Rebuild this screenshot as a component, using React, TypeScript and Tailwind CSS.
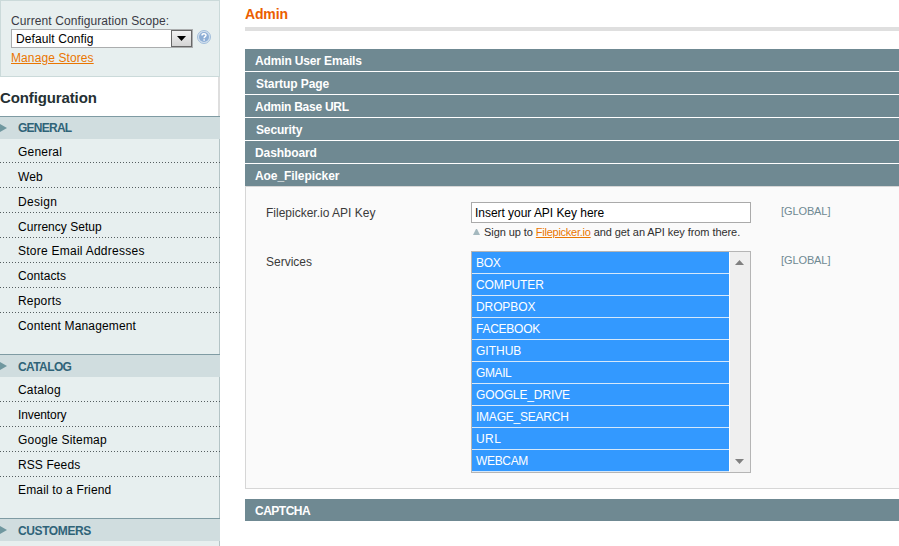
import React from "react";

type Item = { label: string; cls: string };

const general: Item[] = [
  { label: "General", cls: "h-6 pt-1.5 tracking-[0.2px]" },
  { label: "Web", cls: "h-[25px] pt-[7px] tracking-[0.1px]" },
  { label: "Design", cls: "h-[25px] pt-[7px] tracking-[0.3px]" },
  { label: "Currency Setup", cls: "h-[25px] pt-[7px] tracking-[0.02px]" },
  { label: "Store Email Addresses", cls: "h-[25px] pt-1.5 tracking-[0.25px]" },
  { label: "Contacts", cls: "h-[25px] pt-1.5 tracking-[0.1px]" },
  { label: "Reports", cls: "h-[25px] pt-1.5 tracking-[0.2px]" },
  { label: "Content Management", cls: "h-[41px] pt-1.5 tracking-[0.15px]" },
];

const catalog: Item[] = [
  { label: "Catalog", cls: "h-[25px] pt-1.5 tracking-[0.2px]" },
  { label: "Inventory", cls: "h-[25px] pt-1.5 tracking-[-0.1px]" },
  { label: "Google Sitemap", cls: "h-[25px] pt-1.5 tracking-[0.2px]" },
  { label: "RSS Feeds", cls: "h-[25px] pt-1.5 tracking-[0.1px]" },
  { label: "Email to a Friend", cls: "h-[41px] pt-1.5 tracking-[0.16px]" },
];

const sections: Item[] = [
  { label: "Admin User Emails", cls: "pl-2.5 tracking-[-0.15px]" },
  { label: "Startup Page", cls: "pl-[11px] tracking-[-0.07px]" },
  { label: "Admin Base URL", cls: "pl-2.5 tracking-[-0.25px]" },
  { label: "Security", cls: "pl-[11px] tracking-[-0.15px]" },
  { label: "Dashboard", cls: "pl-2.5 tracking-[-0.1px]" },
  { label: "Aoe_Filepicker", cls: "pl-2.5 tracking-[-0.07px]" },
];

const services: Item[] = [
  { label: "BOX", cls: "tracking-[-0.3px]" },
  { label: "COMPUTER", cls: "tracking-[-0.12px]" },
  { label: "DROPBOX", cls: "tracking-[-0.1px]" },
  { label: "FACEBOOK", cls: "tracking-[-0.25px]" },
  { label: "GITHUB", cls: "" },
  { label: "GMAIL", cls: "tracking-[-0.4px]" },
  { label: "GOOGLE_DRIVE", cls: "tracking-[-0.12px]" },
  { label: "IMAGE_SEARCH", cls: "tracking-[-0.23px]" },
  { label: "URL", cls: "tracking-[0.4px]" },
  { label: "WEBCAM", cls: "tracking-[-0.33px]" },
];

function GroupHeader({ title, cls }: { title: string; cls: string }) {
  return (
    <div className="flex h-[23px] items-center border-t border-[#7f9ba3] bg-[#d0dddf] font-bold text-[#2f6378]">
      <svg width="7" height="8" viewBox="0 0 7 8" className="shrink-0">
        <path d="M0 0L7 4L0 8Z" fill="#6f979f" />
      </svg>
      <h4 className={`ml-[11px] leading-[14px] ${cls}`}>{title}</h4>
    </div>
  );
}

function Items({ items }: { items: Item[] }) {
  return (
    <ul className="border-r border-[#b4c4c6] bg-[#e7efef] text-black">
      {items.map((item, i) => (
        <li key={item.label} className={`relative pl-[18px] leading-[14px] ${item.cls}`}>
          {item.label}
          {i < items.length - 1 && (
            <span className="absolute -right-px bottom-0 left-0 h-px bg-[repeating-linear-gradient(to_right,#555e60_0_1px,transparent_1px_3px)]" />
          )}
        </li>
      ))}
    </ul>
  );
}

function Sidebar() {
  return (
    <aside className="w-[220px] shrink-0">
      <div className="h-[77px] border border-[#cbdada] bg-[#e7efef] pl-2.5 pt-[13px]">
        <div className="leading-[15px] tracking-[0.1px] text-[#3a3a44]">Current Configuration Scope:</div>
        <div className="flex">
          <div className="flex h-[19px] w-[182px] border border-[#abadae] bg-white">
            <span className="flex-1 pl-1 pt-[2px] leading-[14px] tracking-[0.1px] text-black">Default Config</span>
            <span className="flex h-[17px] w-[21px] items-center justify-center border border-[#686868] bg-gradient-to-b from-[#f2f2f2] to-[#d4d4d4]">
              <svg width="9" height="5" viewBox="0 0 9 5">
                <path d="M0 0H9L4.5 5Z" fill="#000" />
              </svg>
            </span>
          </div>
          <svg width="14" height="14" viewBox="0 0 14 14" className="ml-[4px] mt-px">
            <circle cx="7" cy="7" r="6.5" fill="#d3e1ee" stroke="#a3bedb" />
            <circle cx="7" cy="7" r="5" fill="#8fafd6" />
            <path d="M5 5.4C5 3.2 9 3.2 9 5.3C9 6.7 7.1 6.5 7.1 8.2M7.1 9.3V10.7" fill="none" stroke="#fff" strokeWidth="1.4" />
          </svg>
        </div>
        <a className="mt-[3px] block leading-[14px] tracking-[0.1px] text-[#ea7601] underline">Manage Stores</a>
      </div>
      <div className="h-[39px] border-r-2 border-[#dedede] pt-3">
        <h3 className="text-[15px] font-bold leading-[18px] tracking-[-0.12px] text-[#253033]">Configuration</h3>
      </div>
      <GroupHeader title="GENERAL" cls="tracking-[-0.75px]" />
      <Items items={general} />
      <GroupHeader title="CATALOG" cls="relative top-px tracking-[-0.6px]" />
      <Items items={catalog} />
      <GroupHeader title="CUSTOMERS" cls="relative top-px tracking-[-0.4px]" />
      <div className="h-[5px] border-r border-[#b4c4c6] bg-[#e7efef]" />
    </aside>
  );
}

function SectionBar({ title, cls }: { title: string; cls: string }) {
  return <div className={`h-[22px] bg-[#6f8992] pt-[5px] font-bold leading-[14px] text-white ${cls}`}>{title}</div>;
}

function ServiceList() {
  return (
    <div className="flex h-[222px] w-[280px] border border-[#b5b5b5] bg-white">
      <ul className="w-[257px] text-white">
        {services.map((s) => (
          <li key={s.label} className={`h-[22px] border-b border-[#d5e8fb] bg-[#3399ff] pl-1 pt-1 leading-[14px] ${s.cls}`}>
            {s.label}
          </li>
        ))}
      </ul>
      <div className="ml-px flex w-5 flex-col items-center justify-between bg-[#efefef] pb-2 pr-0.5 pt-2">
        <svg width="9" height="5" viewBox="0 0 9 5">
          <path d="M0 5L4.5 0L9 5Z" fill="#808080" />
        </svg>
        <svg width="9" height="5" viewBox="0 0 9 5">
          <path d="M0 0H9L4.5 5Z" fill="#808080" />
        </svg>
      </div>
    </div>
  );
}

export default function App() {
  return (
    <div className="flex h-[546px] w-[899px] overflow-hidden bg-white font-['Liberation_Sans',Arial,sans-serif] text-[12px]">
      <Sidebar />
      <main className="ml-[25px] flex-1">
        <h2 className="h-[27px] pt-[5px] text-[14px] font-bold leading-[18px] tracking-[-0.15px] text-[#eb5e00]">Admin</h2>
        <div className="h-1 bg-[#dfdfdf]" />
        <div className="mt-[18px] flex flex-col gap-px">
          {sections.map((s) => (
            <SectionBar key={s.label} title={s.label} cls={s.cls} />
          ))}
        </div>
        <div className="h-[303px] border border-r-0 border-[#d6d6d6] bg-[#fafafa] pl-5 pt-[15px]">
          <div className="flex h-[49px] text-[#3a3a3a]">
            <label className="w-[205px] pt-[4px] leading-[14px]">Filepicker.io API Key</label>
            <div className="w-[280px]">
              <div className="h-[21px] border border-[#aaa] bg-white pl-[3px] pt-[3px] leading-[14px] tracking-[-0.04px] text-black">
                Insert your API Key here
              </div>
              <p className="mt-[2px] flex items-center pl-0.5 text-[11px] leading-[14px] tracking-[-0.07px] text-[#2f2f2f]">
                <svg width="7" height="6" viewBox="0 0 7 6" className="mr-[4px] shrink-0">
                  <path d="M0 6L3 0H4L7 6Z" fill="#a4b8be" />
                </svg>
                <span className="whitespace-nowrap">
                  Sign up to <a className="tracking-[-0.25px] text-[#ea7601] underline">Filepicker.io</a> and get an API key from there.
                </span>
              </p>
            </div>
            <span className="ml-[30px] pt-[2px] text-[11px] leading-[14px] tracking-[-0.1px] text-[#6f8992]">[GLOBAL]</span>
          </div>
          <div className="flex text-[#3a3a3a]">
            <label className="w-[205px] pt-[4px] leading-[14px]">Services</label>
            <ServiceList />
            <span className="ml-[30px] pt-[2px] text-[11px] leading-[14px] tracking-[-0.1px] text-[#6f8992]">[GLOBAL]</span>
          </div>
        </div>
        <div className="mt-2.5">
          <SectionBar title="CAPTCHA" cls="pl-2.5 tracking-[-0.5px]" />
        </div>
      </main>
    </div>
  );
}
